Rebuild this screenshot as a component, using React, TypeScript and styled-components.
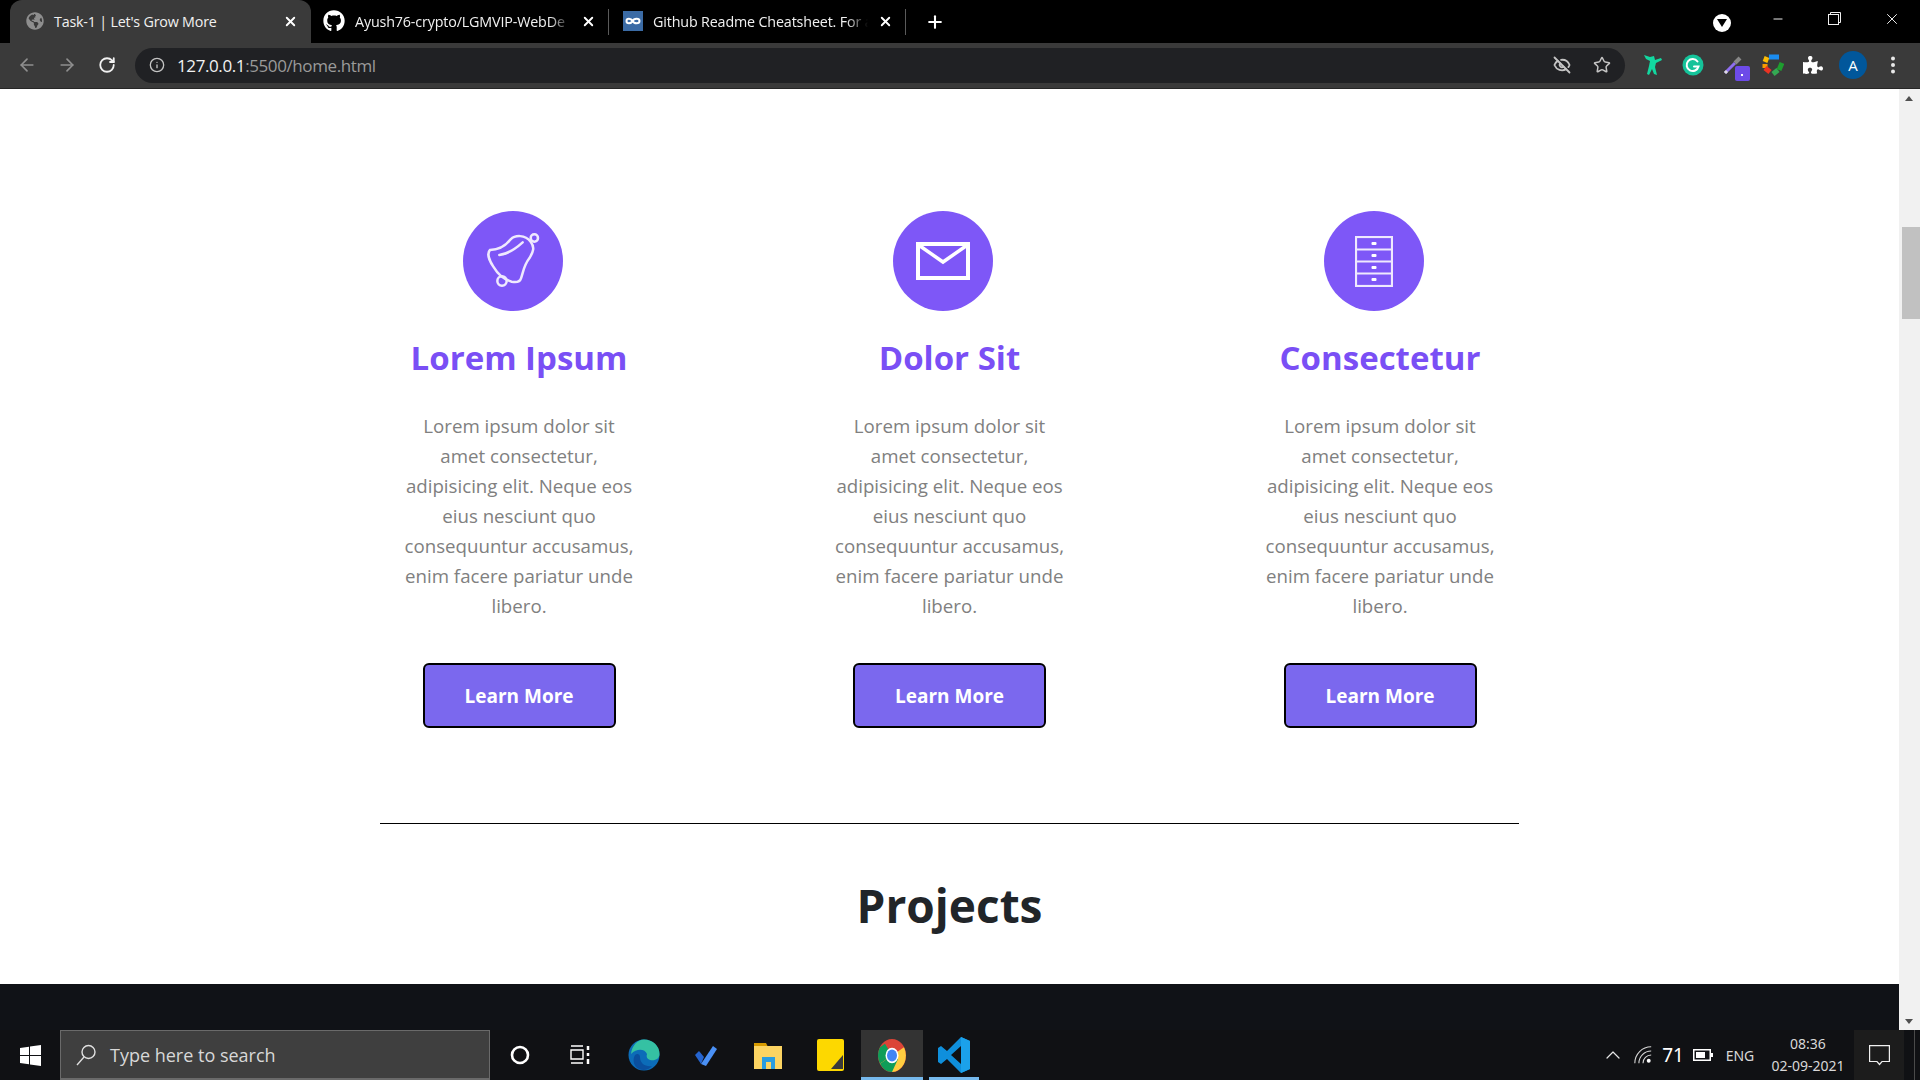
import styled, { createGlobalStyle } from "styled-components";
import { ArrowLeft, ArrowRight, RotateCw, Info, EyeOff, Star, Plus, X, Minus, ChevronUp } from "lucide-react";
import { FaGithub, FaPuzzlePiece, FaGlobeAmericas } from "react-icons/fa";

const GlobalStyle = createGlobalStyle`
  html, body {
    margin: 0;
    padding: 0;
    height: 100%;
    overflow: hidden;
    background: #000;
  }
  * {
    box-sizing: border-box;
  }
`;

const Screen = styled.div`
  width: 1920px;
  height: 1080px;
  display: flex;
  flex-direction: column;
  overflow: hidden;
  font-family: "Open Sans", "Noto Sans", sans-serif;
`;

/* browser chrome */
const TabStrip = styled.div`
  height: 43px;
  flex: none;
  background: #000;
  display: flex;
  align-items: stretch;
  padding-left: 10px;
`;

const Tab = styled.div<{ $active?: boolean; $width: number; $pad: number }>`
  width: ${p => p.$width}px;
  padding-left: ${p => p.$pad}px;
  padding-right: 13px;
  padding-bottom: 1px;
  display: flex;
  align-items: center;
  gap: 10px;
  color: #f1f1f1;
  background: ${p => (p.$active ? "#3a3a3a" : "transparent")};
  border-radius: ${p => (p.$active ? "12px 12px 0 0" : "0")};
  position: relative;

  svg {
    flex: none;
  }

  ${p => !p.$active && `
    &::after {
      content: "";
      position: absolute;
      right: 0;
      top: 9px;
      bottom: 8px;
      width: 1px;
      background: #5a5a5a;
    }
  `}
`;

const TabTitle = styled.span<{ $fade?: boolean }>`
  flex: 1;
  min-width: 0;
  font-size: 14.3px;
  letter-spacing: ${p => (p.$fade ? "-0.15px" : "-0.2px")};
  white-space: nowrap;
  ${p => p.$fade && `
    mask-image: linear-gradient(to right, #000 90%, transparent 100%);
  `}
`;

const NewTab = styled.div`
  width: 58px;
  display: flex;
  align-items: center;
  justify-content: center;
  color: #fff;
`;

const WindowControls = styled.div`
  margin-left: auto;
  display: flex;
  align-items: center;
  color: #f0f0f0;
  padding-bottom: 6px;
`;

const ProfileBadge = styled.div`
  width: 18px;
  height: 18px;
  margin-top: 8px;
  margin-right: 18px;
  border-radius: 50%;
  background: #fff;
  display: flex;
  align-items: center;
  justify-content: center;
`;

const WindowButton = styled.div`
  width: 57px;
  display: flex;
  justify-content: center;
`;

const Toolbar = styled.div`
  height: 46px;
  flex: none;
  background: #3a3a3a;
  border-bottom: 1px solid #262626;
  display: flex;
  align-items: center;
  padding-left: 7px;
  padding-bottom: 1px;
`;

const NavButton = styled.div<{ $dim?: boolean }>`
  width: 40px;
  display: flex;
  justify-content: center;
  color: ${p => (p.$dim ? "#8f8f8f" : "#f1f1f1")};
`;

const AddressBar = styled.div`
  width: 1490px;
  height: 35px;
  margin-left: 8px;
  border-radius: 18px;
  background: #202124;
  display: flex;
  align-items: center;
  padding-left: 14px;
  padding-right: 3px;
  color: #c4c4c4;
`;

const Url = styled.div`
  margin-left: 12px;
  font-size: 17px;
  letter-spacing: -0.4px;
  color: #9a9a9a;
  flex: 1;

  b {
    font-weight: 400;
    color: #f2f2f2;
  }
`;

const AddressAction = styled.div`
  width: 40px;
  display: flex;
  justify-content: center;
`;

const Extensions = styled.div`
  display: flex;
  align-items: center;
  margin-left: 8px;
`;

const Extension = styled.div`
  width: 40px;
  height: 32px;
  display: flex;
  align-items: center;
  justify-content: center;
  position: relative;
`;

const PickerBadge = styled.div`
  position: absolute;
  right: 3px;
  bottom: 0;
  width: 15px;
  height: 15px;
  border-radius: 2px;
  background: #6d4be8;

  &::after {
    content: "";
    position: absolute;
    left: 6px;
    top: 8px;
    width: 2px;
    height: 2px;
    background: #fff;
  }
`;

const Avatar = styled.div`
  width: 28px;
  height: 28px;
  border-radius: 50%;
  background: #01579b;
  color: #fff;
  font-size: 15px;
  display: flex;
  align-items: center;
  justify-content: center;
`;

/* page viewport */
const Viewport = styled.div`
  flex: 1;
  display: flex;
  min-height: 0;
`;

const PageColumn = styled.div`
  flex: 1;
  display: flex;
  flex-direction: column;
  min-width: 0;
`;

const Page = styled.main`
  flex: 1;
  background: #fff;
  overflow: hidden;
  padding-top: 122px;
  display: flex;
  flex-direction: column;
  align-items: center;
`;

const BlackBand = styled.div`
  height: 46px;
  flex: none;
  background: #101217;
`;

const Scrollbar = styled.div`
  width: 21px;
  flex: none;
  background: #f1f1f1;
  display: flex;
  flex-direction: column;
  align-items: flex-end;
  position: relative;
`;

const ScrollArrow = styled.div<{ $down?: boolean }>`
  position: absolute;
  left: 6px;
  ${p => (p.$down ? "bottom: 6px;" : "top: 7px;")}
  width: 0;
  height: 0;
  border-left: 4.5px solid transparent;
  border-right: 4.5px solid transparent;
  ${p => (p.$down ? "border-top: 5px solid #505050;" : "border-bottom: 5px solid #505050;")}
`;

const ScrollThumb = styled.div`
  width: 18px;
  height: 92px;
  margin-top: 138px;
  background: #c1c1c1;
`;

const Features = styled.section`
  display: flex;
  justify-content: center;
`;

const Feature = styled.article`
  width: 430.5px;
  display: flex;
  flex-direction: column;
  align-items: center;
`;

const IconCircle = styled.div`
  width: 100px;
  height: 100px;
  margin-right: 13px;
  border-radius: 50%;
  background: #7e57f7;
  display: flex;
  align-items: center;
  justify-content: center;
`;

const FeatureTitle = styled.h3`
  margin: 24px 0 0;
  font-size: 33px;
  line-height: 46px;
  font-weight: 700;
  color: #7a4ff5;
`;

const FeatureText = styled.p`
  margin: 30px 0 0;
  width: 238px;
  font-size: 18.7px;
  line-height: 30px;
  color: #808080;
  text-align: center;
`;

const LearnMore = styled.button`
  margin-top: 42px;
  width: 193px;
  height: 65px;
  padding-top: 2px;
  border: 2px solid #000;
  border-radius: 6px;
  background: #7b68ee;
  color: #fff;
  font-family: inherit;
  font-size: 19px;
  font-weight: 700;
`;

const Divider = styled.hr`
  width: 1139px;
  flex: none;
  margin: 95px 0 0;
  border: 0;
  border-top: 1px solid #000;
`;

const SectionTitle = styled.h2`
  margin: 45px 0 0;
  font-size: 46px;
  line-height: 72px;
  font-weight: 700;
  color: #212529;
`;

/* windows taskbar */
const Taskbar = styled.footer`
  height: 50px;
  flex: none;
  background: #101114;
  display: flex;
  align-items: stretch;
`;

const StartButton = styled.div`
  width: 60px;
  display: flex;
  align-items: center;
  justify-content: center;
`;

const SearchBox = styled.div`
  width: 430px;
  background: #3f3f3f;
  border: 1px solid #6a6a6a;
  border-bottom-width: 2px;
  display: flex;
  align-items: center;
  gap: 14px;
  padding-left: 15px;
  color: #d8d8d8;
  font-size: 18px;
`;

const TaskSlot = styled.div<{ $width?: number; $active?: boolean; $running?: boolean }>`
  width: ${p => p.$width ?? 62}px;
  display: flex;
  align-items: center;
  justify-content: center;
  position: relative;
  background: ${p => (p.$active ? "#333333" : "transparent")};

  ${p => p.$running && `
    &::after {
      content: "";
      position: absolute;
      bottom: 0;
      left: ${p.$active ? 0 : 6}px;
      right: ${p.$active ? 0 : 6}px;
      height: 3px;
      background: #76b9ed;
    }
  `}
`;

const AppGroup = styled.div`
  display: flex;
  margin-left: 3px;
`;

const Tray = styled.div`
  margin-left: auto;
  display: flex;
  align-items: center;
  color: #e6e6e6;
`;

const TraySlot = styled.div<{ $width: number }>`
  width: ${p => p.$width}px;
  display: flex;
  justify-content: center;
  align-items: center;
`;

const TrayText = styled.span<{ $big?: boolean }>`
  font-size: ${p => (p.$big ? 19 : 14)}px;
  font-family: "Noto Sans", sans-serif;
  color: ${p => (p.$big ? "#fff" : "#d8d8d8")};
`;

const Clock = styled.div`
  width: 92px;
  text-align: center;
  font-size: 14px;
  line-height: 22px;
  font-family: "Noto Sans", sans-serif;
  color: #d8d8d8;
`;

const NotifyButton = styled.div`
  width: 50px;
  align-self: stretch;
  background: #1c1c1c;
  display: flex;
  align-items: center;
  justify-content: center;
`;

const ShowDesktop = styled.div`
  width: 16px;
  align-self: stretch;
  position: relative;

  &::before {
    content: "";
    position: absolute;
    left: 10px;
    top: 0;
    bottom: 0;
    width: 1px;
    background: #4a4a4a;
  }
`;

const BellIcon = () => (
  <svg width="100" height="100" viewBox="69 33 300 300" fill="none" stroke="#efe9fe" strokeWidth="7.5" strokeLinecap="round">
    <path d="M150 150 C175 150 195 140 212 118 C225 105 255 103 272 125 C285 142 280 155 268 175 C252 195 250 215 243 235 C240 245 230 248 215 245 C195 240 175 225 160 200 C148 182 140 160 150 150 Z" />
    <path d="M178 165 C205 162 228 145 248 127" />
    <circle cx="283" cy="114" r="11" />
    <circle cx="186" cy="243" r="14" />
  </svg>
);

const MailIcon = () => (
  <svg width="54" height="38" viewBox="0 0 54 38" fill="none" stroke="#fff" strokeWidth="4">
    <rect x="2" y="2" width="50" height="34" />
    <path d="M4 4 L27 20 L50 4" strokeWidth="3.5" />
  </svg>
);

const CabinetIcon = () => (
  <svg width="38" height="51" viewBox="0 0 38 51" fill="none" stroke="#efe9fe" strokeWidth="2.2">
    <rect x="1" y="1" width="36" height="49" />
    <path d="M1 13.5 H37 M1 25.5 H37 M1 37.5 H37" />
    <g fill="#fff" stroke="none">
      <rect x="16.5" y="6" width="5" height="3" rx="1" />
      <rect x="16.5" y="18" width="5" height="3" rx="1" />
      <rect x="16.5" y="30" width="5" height="3" rx="1" />
      <rect x="16.5" y="42" width="5" height="3" rx="1" />
    </g>
  </svg>
);

const CodepenMark = () => (
  <svg width="20" height="20" viewBox="0 0 20 20">
    <rect width="20" height="20" fill="#3b6ba5" />
    <path d="M9.5 10 C8 7 3.5 7 3.5 10 C3.5 13 8 13 9.5 10 C11 7 16.5 7 16.5 10 C16.5 13 11 13 9.5 10 Z" fill="none" stroke="#fff" strokeWidth="2" />
  </svg>
);

const GrammarlyMark = () => (
  <svg width="22" height="22" viewBox="0 0 22 22" fill="none">
    <circle cx="11" cy="11" r="10.5" fill="#15c39a" />
    <path d="M15.5 7.5 A6 6 0 1 0 16.5 12.5 H12" stroke="#fff" strokeWidth="2" strokeLinecap="round" />
  </svg>
);

const RunnerMark = () => (
  <svg width="20" height="22" viewBox="0 0 20 22" fill="#12d8a0">
    <path d="M1 1 L7 3 L11 2 L12 6 L18 4 L19 6 L13 9 L12 13 L14 21 L11 20 L9 15 L6 21 L4 20 L6 12 L7 7 L3 5 Z" />
  </svg>
);

const PickerMark = () => (
  <svg width="20" height="20" viewBox="0 0 20 20" fill="none">
    <path d="M2 18 L12 8" stroke="#8f6ef0" strokeWidth="3" />
    <path d="M12 8 L17 3" stroke="#888" strokeWidth="4" />
    <path d="M2 18 L4 16" stroke="#ddd" strokeWidth="3" />
  </svg>
);

const RecycleMark = () => (
  <svg width="22" height="24" viewBox="0 0 22 24" fill="none" strokeWidth="5">
    <path d="M7 4 L17 4" stroke="#1a8cf0" />
    <path d="M5 4 L3 9" stroke="#fbbc05" />
    <path d="M3 11 L3 15" stroke="#f59a00" />
    <path d="M3 15 L8 19" stroke="#ea3323" />
    <path d="M11 21 L16 17" stroke="#34a853" />
    <path d="M20 10 L17 17" stroke="#1e9e2f" />
  </svg>
);

const WindowsLogo = () => (
  <svg width="21" height="21" viewBox="0 0 21 21" fill="#fff">
    <path d="M0 3 L9 1.7 V10 H0 Z M10 1.5 L21 0 V10 H10 Z M0 11 H9 V19.3 L0 18 Z M10 11 H21 V21 L10 19.5 Z" />
  </svg>
);

const SearchGlyph = () => (
  <svg width="20" height="22" viewBox="0 0 20 22" fill="none" stroke="#e0e0e0" strokeWidth="1.4">
    <circle cx="12.5" cy="8" r="6.5" />
    <path d="M8 13 L1 21" />
  </svg>
);

const TaskViewGlyph = () => (
  <svg width="20" height="20" viewBox="0 0 20 20" fill="none" stroke="#fff" strokeWidth="1.4">
    <path d="M1 1 H13 M1 5 H13 V14 H1 Z M1 18 H13" />
    <path d="M18 1 V5 M18 8 V11 M18 14 V19" strokeWidth="2.5" />
  </svg>
);

const EdgeMark = () => (
  <svg width="32" height="32" viewBox="0 0 32 32">
    <circle cx="16" cy="16" r="15.5" fill="#0c6cb8" />
    <path d="M16 .5 C25 .5 31.5 7 31.5 15 C31.5 20 27 22 22 21 C19 20 18 18 19 15 C17 10 9 9 3 15 C4 7 9 .5 16 .5 Z" fill="#35c1a3" />
    <path d="M12 18 C12 25 18 28 24 27 C21 31 15 32 11 30 C6 28 4 21 7 16 C9 14 12 15 12 18 Z" fill="#0a4f9e" />
  </svg>
);

const TodoMark = () => (
  <svg width="24" height="24" viewBox="0 0 24 24">
    <path d="M1 12 L5 8 L10 14 L7 21 Z" fill="#2564cf" />
    <path d="M7 21 L19 3 L23 6 L12 23 Z" fill="#4a90f5" />
  </svg>
);

const FolderMark = () => (
  <svg width="28" height="28" viewBox="0 0 28 28">
    <path d="M0 2 H12 L14 6 H0 Z" fill="#d69a00" />
    <rect y="5" width="28" height="23" fill="#fcd462" />
    <rect x="8" y="16" width="13" height="12" fill="#2a9de0" />
    <rect x="12" y="21" width="5" height="7" fill="#fcd462" />
  </svg>
);

const StickyMark = () => (
  <svg width="27" height="32" viewBox="0 0 27 32">
    <rect width="27" height="32" rx="2" fill="#fdd800" />
    <path d="M14 30 L26 16 V30 Z" fill="#3a3a3a" />
  </svg>
);

const ChromeMark = () => (
  <svg width="28" height="33" viewBox="0 0 28 28" preserveAspectRatio="none">
    <circle cx="14" cy="14" r="14" fill="#db4437" />
    <path d="M14 14 L2 21 A14 14 0 0 1 2 7 L7 4 Z" fill="#0f9d58" />
    <path d="M14 14 L26 7 A14 14 0 0 1 14 28 L2 21 Z" fill="#ffcd40" />
    <path d="M14 14 L2 21 A14 14 0 0 0 14 28 L20 17 Z" fill="#0f9d58" />
    <circle cx="14" cy="14" r="6.5" fill="#fff" />
    <circle cx="14" cy="14" r="5" fill="#4285f4" />
  </svg>
);

const VscodeMark = () => (
  <svg width="32" height="36" viewBox="0 0 32 36">
    <path d="M23 0 L32 4 V32 L23 36 L9 22 L3 27 L0 25 V11 L3 9 L9 14 Z M23 9 L13 18 L23 27 Z" fill="#0f8fdc" />
    <path d="M23 0 L32 4 V32 L23 36 Z M23 9 L23 27" fill="#1ba1ea" />
  </svg>
);

const WifiGlyph = () => (
  <svg width="18" height="18" viewBox="0 0 22 22" fill="none" stroke="#d8d8d8" strokeWidth="1.3">
    <path d="M1 21 A20 20 0 0 1 21 1 M6 21 A15 15 0 0 1 21 6 M11 21 A10 10 0 0 1 21 11" />
    <circle cx="18" cy="18" r="2.4" fill="#fff" stroke="none" />
  </svg>
);

const BatteryGlyph = () => (
  <svg width="20" height="12" viewBox="0 0 20 12" fill="none">
    <rect x=".75" y=".75" width="16.5" height="10.5" stroke="#fff" strokeWidth="1.5" />
    <rect x="3" y="3" width="9" height="6" fill="#fff" />
    <rect x="18" y="4" width="2" height="4" fill="#fff" />
  </svg>
);

const NotifyGlyph = () => (
  <svg width="21" height="21" viewBox="0 0 21 21" fill="none" stroke="#f0f0f0" strokeWidth="1.2">
    <path d="M.6 .6 H20.4 V16.5 H13 L10.5 19.5 L8 16.5 H.6 Z" />
  </svg>
);

const RestoreGlyph = () => (
  <svg width="13" height="13" viewBox="0 0 13 13" fill="none" stroke="#f0f0f0" strokeWidth="1">
    <rect x=".5" y="2.5" width="10" height="10" />
    <path d="M2.5 2.5 V.5 H12.5 V10.5 H10.5" />
  </svg>
);

const features = [
  { title: "Lorem Ipsum", icon: <BellIcon /> },
  { title: "Dolor Sit", icon: <MailIcon /> },
  { title: "Consectetur", icon: <CabinetIcon /> },
];

export default function App() {
  return (
    <Screen>
      <GlobalStyle />
      <TabStrip>
        <Tab $active $width={301} $pad={16}>
          <FaGlobeAmericas size={18} color="#8e8e8e" />
          <TabTitle>Task-1 | Let's Grow More</TabTitle>
          <X size={15} strokeWidth={3} color="#fff" />
        </Tab>
        <Tab $width={298} $pad={12}>
          <FaGithub size={22} color="#fff" />
          <TabTitle $fade>Ayush76-crypto/LGMVIP-WebDe</TabTitle>
          <X size={15} strokeWidth={3} color="#fff" />
        </Tab>
        <Tab $width={297} $pad={14}>
          <CodepenMark />
          <TabTitle $fade>Github Readme Cheatsheet. For a</TabTitle>
          <X size={15} strokeWidth={3} color="#fff" />
        </Tab>
        <NewTab>
          <Plus size={20} strokeWidth={2.5} />
        </NewTab>
        <WindowControls>
          <ProfileBadge>
            <svg width="10" height="8" viewBox="0 0 10 8"><path d="M0 0 H10 L5 8 Z" fill="#000" /></svg>
          </ProfileBadge>
          <WindowButton><Minus size={14} strokeWidth={1.7} /></WindowButton>
          <WindowButton><RestoreGlyph /></WindowButton>
          <WindowButton><X size={18} strokeWidth={1.3} /></WindowButton>
        </WindowControls>
      </TabStrip>

      <Toolbar>
        <NavButton $dim><ArrowLeft size={20} /></NavButton>
        <NavButton $dim><ArrowRight size={20} /></NavButton>
        <NavButton><RotateCw size={18} strokeWidth={2.4} /></NavButton>
        <AddressBar>
          <Info size={16} />
          <Url><b>127.0.0.1</b>:5500/home.html</Url>
          <AddressAction><EyeOff size={18} strokeWidth={2.4} /></AddressAction>
          <AddressAction><Star size={18} /></AddressAction>
        </AddressBar>
        <Extensions>
          <Extension><RunnerMark /></Extension>
          <Extension><GrammarlyMark /></Extension>
          <Extension><PickerMark /><PickerBadge /></Extension>
          <Extension><RecycleMark /></Extension>
          <Extension><FaPuzzlePiece size={20} color="#fff" /></Extension>
          <Extension><Avatar>A</Avatar></Extension>
          <Extension>
            <svg width="4" height="18" viewBox="0 0 4 18" fill="#e8e8e8">
              <circle cx="2" cy="2.5" r="2" /><circle cx="2" cy="9" r="2" /><circle cx="2" cy="15.5" r="2" />
            </svg>
          </Extension>
        </Extensions>
      </Toolbar>

      <Viewport>
        <PageColumn>
          <Page>
            <Features>
              {features.map(item => (
                <Feature key={item.title}>
                  <IconCircle>{item.icon}</IconCircle>
                  <FeatureTitle>{item.title}</FeatureTitle>
                  <FeatureText>
                    Lorem ipsum dolor sit amet consectetur, adipisicing elit. Neque eos eius nesciunt quo consequuntur accusamus, enim facere pariatur unde libero.
                  </FeatureText>
                  <LearnMore>Learn More</LearnMore>
                </Feature>
              ))}
            </Features>
            <Divider />
            <SectionTitle>Projects</SectionTitle>
          </Page>
          <BlackBand />
        </PageColumn>
        <Scrollbar>
          <ScrollArrow />
          <ScrollThumb />
          <ScrollArrow $down />
        </Scrollbar>
      </Viewport>

      <Taskbar>
        <StartButton><WindowsLogo /></StartButton>
        <SearchBox>
          <SearchGlyph />
          Type here to search
        </SearchBox>
        <TaskSlot $width={60}>
          <svg width="20" height="20" viewBox="0 0 20 20" fill="none" stroke="#fff" strokeWidth="2.6"><circle cx="10" cy="10" r="8" /></svg>
        </TaskSlot>
        <TaskSlot $width={60}><TaskViewGlyph /></TaskSlot>
        <AppGroup>
          <TaskSlot><EdgeMark /></TaskSlot>
          <TaskSlot><TodoMark /></TaskSlot>
          <TaskSlot><FolderMark /></TaskSlot>
          <TaskSlot><StickyMark /></TaskSlot>
          <TaskSlot $active $running><ChromeMark /></TaskSlot>
          <TaskSlot $running><VscodeMark /></TaskSlot>
        </AppGroup>
        <Tray>
          <TraySlot $width={30}><ChevronUp size={24} strokeWidth={1.2} /></TraySlot>
          <TraySlot $width={30}><WifiGlyph /></TraySlot>
          <TraySlot $width={30}><TrayText $big>71</TrayText></TraySlot>
          <TraySlot $width={30}><BatteryGlyph /></TraySlot>
          <TraySlot $width={44}><TrayText>ENG</TrayText></TraySlot>
          <Clock>08:36<br />02-09-2021</Clock>
          <NotifyButton><NotifyGlyph /></NotifyButton>
          <ShowDesktop />
        </Tray>
      </Taskbar>
    </Screen>
  );
}
